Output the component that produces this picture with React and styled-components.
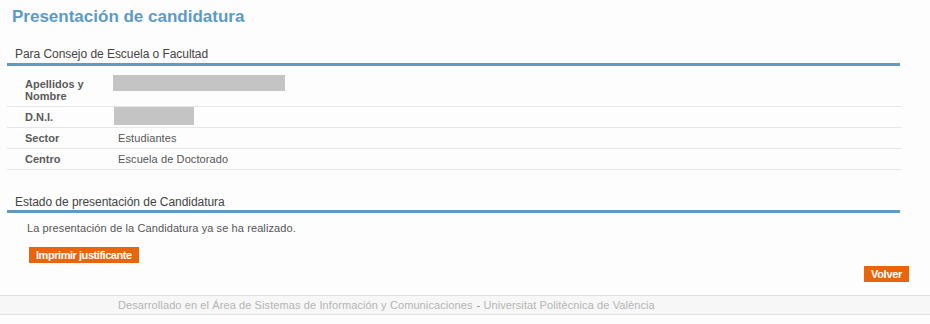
import React from "react";
import styled, { createGlobalStyle } from "styled-components";

const Global = createGlobalStyle`
  html, body { margin: 0; padding: 0; background: #fdfdfd; }
  body { font-family: "Liberation Sans", Arial, sans-serif; font-size: 11px; color: #555; }
`;

const Page = styled.div`
  width: 930px;
  display: flex;
  flex-direction: column;
`;

const Title = styled.h1`
  margin: 0;
  padding: 6px 0 0 12px;
  font-size: 17px;
  line-height: 22px;
  font-weight: bold;
  color: #5c9bc6;
`;

const Section = styled.section`
  width: 894px;
  margin: ${(p) => p.$top}px 0 0 7px;
`;

const SectionHeader = styled.div`
  padding: 0 0 ${(p) => p.$pb}px 8px;
  font-size: 12px;
  line-height: 14px;
  color: #444;
  letter-spacing: -0.05px;
  border-bottom: 3px solid #5f9bc0;
  width: 885px;
`;

const Row = styled.div`
  display: grid;
  grid-template-columns: 111px 1fr;
  min-height: ${(p) => p.$h}px;
  border-bottom: 1px solid #e6e6e6;
`;

const Label = styled.div`
  padding: ${(p) => p.$pt}px 0 0 18px;
  font-weight: bold;
  font-size: 11px;
  line-height: ${(p) => p.$lh}px;
  color: #5a5a5a;
`;

const Value = styled.div`
  padding-top: ${(p) => p.$pt || 0}px;
  font-size: 11px;
  line-height: 20px;
  letter-spacing: 0.1px;
  color: #555;
`;

const Redacted = styled.div`
  background: #c4c4c4;
  width: ${(p) => p.$w}px;
  height: ${(p) => p.$h}px;
  margin-left: ${(p) => p.$ml}px;
`;

const Message = styled.p`
  margin: 8px 0 0 20px;
  font-size: 11px;
  line-height: 14px;
  letter-spacing: 0.1px;
  color: #555;
`;

const OrangeButton = styled.button`
  display: inline-block;
  border: 0;
  margin: 0;
  background: #e8650c;
  color: #fff;
  font-family: "Liberation Sans", Arial, sans-serif;
  font-weight: bold;
  font-size: 11px;
  line-height: 16px;
  height: 16px;
  padding: 0 7px;
  letter-spacing: ${(p) => p.$ls || 0}px;
  cursor: pointer;
`;

const PrintWrap = styled.div`
  margin: 12px 0 0 22px;
  display: flex;
`;

const BackBar = styled.div`
  display: flex;
  justify-content: flex-end;
  margin-top: 3px;
  padding-right: 21px;
`;

const Footer = styled.footer`
  margin-top: 13px;
  border-top: 1px solid #e0e0e0;
  border-bottom: 1px solid #e0e0e0;
  background: #f7f7f7;
  height: 18px;
  line-height: 18px;
  padding-left: 118px;
  font-size: 11px;
  letter-spacing: 0.1px;
  color: #b4b4b4;
`;

const Dash = styled.span`
  color: #888;
  margin: 0 3px 0 4px;
`;

export default function App() {
  return (
    <Page>
      <Global />
      <Title>Presentación de candidatura</Title>

      <Section $top={19}>
        <SectionHeader $pb={2}>Para Consejo de Escuela o Facultad</SectionHeader>
        <Row $h={40}>
          <Label $pt={12} $lh={12}>Apellidos y<br />Nombre</Label>
          <Value $pt={9}><Redacted $w={172} $h={16} $ml={-5} /></Value>
        </Row>
        <Row $h={20}>
          <Label $pt={0} $lh={20}>D.N.I.</Label>
          <Value><Redacted $w={80} $h={18} $ml={-4} /></Value>
        </Row>
        <Row $h={20}>
          <Label $pt={0} $lh={20}>Sector</Label>
          <Value>Estudiantes</Value>
        </Row>
        <Row $h={20}>
          <Label $pt={0} $lh={20}>Centro</Label>
          <Value>Escuela de Doctorado</Value>
        </Row>
      </Section>

      <Section $top={25}>
        <SectionHeader $pb={1}>Estado de presentación de Candidatura</SectionHeader>
        <Message>La presentación de la Candidatura ya se ha realizado.</Message>
        <PrintWrap>
          <OrangeButton $ls={-0.45}>Imprimir justificante</OrangeButton>
        </PrintWrap>
      </Section>

      <BackBar>
        <OrangeButton $ls={-0.3}>Volver</OrangeButton>
      </BackBar>

      <Footer>
        Desarrollado en el Área de Sistemas de Información y Comunicaciones
        <Dash>-</Dash>
        Universitat Politècnica de València
      </Footer>
    </Page>
  );
}
